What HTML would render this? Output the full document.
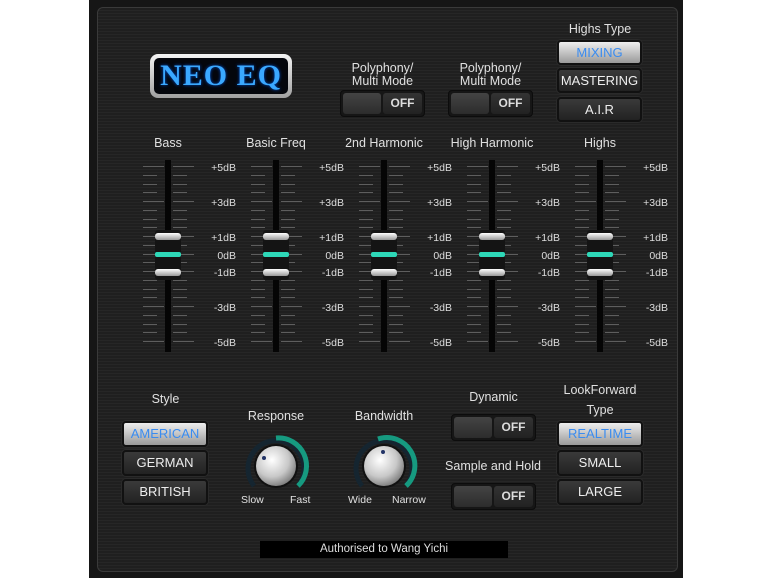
<!DOCTYPE html>
<html><head><meta charset="utf-8"><style>
*{margin:0;padding:0;box-sizing:border-box}
body{width:770px;height:578px;background:#fff;position:relative;overflow:hidden;font-family:"Liberation Sans",sans-serif;color:#ddd}
.a{position:absolute}
#outer{left:89px;top:0;width:594px;height:578px;background:#161616}
#inner{left:97px;top:7px;width:581px;height:565px;border:1px solid #3a3a3a;border-radius:6px;background:repeating-linear-gradient(0deg,#1f1f1f 0,#1f1f1f 2px,#262626 2px,#262626 3px)}
.lbl{position:absolute;font-size:12.5px;color:#e0e0e0;text-align:center;white-space:nowrap}
.btn{position:absolute;border-radius:4px;background:linear-gradient(#3a3a3a,#222);border:2px solid #111;box-shadow:0 0 0 1px #2a2a2a;color:#eee;font-size:13px;text-align:center;font-weight:normal}
.btn.on{background:linear-gradient(#eee,#9a9a9a);color:#3a8cf0}
.tog{position:absolute;width:85px;height:27px;border-radius:4px;background:#161616;border:1px solid #0c0c0c}
.tog .l{position:absolute;left:2px;top:2px;width:38px;height:21px;border-radius:3px;background:linear-gradient(#444,#2c2c2c)}
.tog .r{position:absolute;left:42px;top:2px;width:39px;height:21px;border-radius:3px;background:linear-gradient(#333,#222);color:#ddd;font-size:12px;font-weight:bold;text-align:center;line-height:21px}
.db{position:absolute;font-size:10.5px;color:#ddd;text-align:right;width:36px}
.tick{position:absolute;height:1px;background:#5e5e5e}
.track{position:absolute;width:6px;background:#050505}
</style></head><body>
<div id="outer" class="a"></div>
<div id="inner" class="a"></div>

<div class="a" style="left:150px;top:54px;width:142px;height:44px;border-radius:8px;background:linear-gradient(#f4f4f4,#a0a0a0);padding:4px">
<div style="width:100%;height:100%;border-radius:5px;background:#04060c;font-family:'Liberation Serif',serif;font-weight:bold;font-size:30px;color:#3aa8ff;text-align:center;line-height:36px;letter-spacing:1px;text-shadow:0 0 3px #0050d0">NEO EQ</div></div>

<div class="lbl" style="left:340px;top:62px;width:85px;line-height:13px">Polyphony/<br>Multi Mode</div>
<div class="tog" style="left:340px;top:90px"><div class="l"></div><div class="r">OFF</div></div>
<div class="lbl" style="left:448px;top:62px;width:85px;line-height:13px">Polyphony/<br>Multi Mode</div>
<div class="tog" style="left:448px;top:90px"><div class="l"></div><div class="r">OFF</div></div>

<div class="lbl" style="left:558px;top:22px;width:84px">Highs Type</div>
<div class="btn on" style="left:557px;top:40px;width:85px;height:25px;line-height:21px">MIXING</div>
<div class="btn" style="left:557px;top:68px;width:85px;height:25px;line-height:21px">MASTERING</div>
<div class="btn" style="left:557px;top:97px;width:85px;height:25px;line-height:21px">A.I.R</div>

<div id="sliders"></div>

<div class="lbl" style="left:123px;top:392px;width:85px">Style</div>
<div class="btn on" style="left:122px;top:421px;width:86px;height:26px;line-height:22px">AMERICAN</div>
<div class="btn" style="left:122px;top:450px;width:86px;height:26px;line-height:22px">GERMAN</div>
<div class="btn" style="left:122px;top:479px;width:86px;height:26px;line-height:22px">BRITISH</div>

<div class="lbl" style="left:236px;top:409px;width:80px">Response</div>
<div class="lbl" style="left:344px;top:409px;width:80px">Bandwidth</div>
<svg class="a" style="left:240px;top:432px" width="72" height="68">
<defs><radialGradient id="k" cx="40%" cy="35%" r="70%"><stop offset="0" stop-color="#fff"/><stop offset="0.6" stop-color="#c8c8c8"/><stop offset="1" stop-color="#777"/></radialGradient></defs>
<path d="M14 54 A28 28 0 1 1 58 54" fill="none" stroke="#152530" stroke-width="5"/>
<path d="M36 6 A28 28 0 0 1 58 54" fill="none" stroke="#169a80" stroke-width="5"/>
<circle cx="36" cy="34" r="22" fill="#111"/><circle cx="36" cy="34" r="20" fill="url(#k)"/>
<circle cx="24" cy="26" r="2" fill="#236"/></svg>
<svg class="a" style="left:348px;top:432px" width="72" height="68">
<path d="M14 54 A28 28 0 1 1 58 54" fill="none" stroke="#152530" stroke-width="5"/>
<path d="M30 7 A28 28 0 0 1 58 54" fill="none" stroke="#169a80" stroke-width="5"/>
<circle cx="36" cy="34" r="22" fill="#111"/><circle cx="36" cy="34" r="20" fill="url(#k)"/>
<circle cx="35" cy="20" r="2" fill="#236"/></svg>
<div class="lbl" style="left:241px;top:494px;font-size:10.5px">Slow</div>
<div class="lbl" style="left:290px;top:494px;font-size:10.5px">Fast</div>
<div class="lbl" style="left:348px;top:494px;font-size:10.5px">Wide</div>
<div class="lbl" style="left:392px;top:494px;font-size:10.5px">Narrow</div>

<div class="lbl" style="left:451px;top:390px;width:85px">Dynamic</div>
<div class="tog" style="left:451px;top:414px"><div class="l"></div><div class="r">OFF</div></div>
<div class="lbl" style="left:436px;top:459px;width:114px">Sample and Hold</div>
<div class="tog" style="left:451px;top:483px"><div class="l"></div><div class="r">OFF</div></div>

<div class="lbl" style="left:550px;top:380px;width:100px;line-height:20px">LookForward<br>Type</div>
<div class="btn on" style="left:557px;top:421px;width:86px;height:26px;line-height:22px">REALTIME</div>
<div class="btn" style="left:557px;top:450px;width:86px;height:26px;line-height:22px">SMALL</div>
<div class="btn" style="left:557px;top:479px;width:86px;height:26px;line-height:22px">LARGE</div>

<div class="a" style="left:260px;top:541px;width:248px;height:17px;background:#000;color:#ddd;font-size:11.5px;text-align:center;line-height:17px">Authorised to Wang Yichi</div>

<script>
var names=["Bass","Basic Freq","2nd Harmonic","High Harmonic","Highs"];
var h="";
var labs={0:"+5dB",4:"+3dB",8:"+1dB",10:"0dB",12:"-1dB",16:"-3dB",20:"-5dB"};
for(var i=0;i<5;i++){var cx=168+i*108;
h+='<div class="lbl" style="left:'+(cx-50)+'px;top:136px;width:100px">'+names[i]+'</div>';
for(var t=0;t<=20;t++){var y=Math.round(166+t*8.75);var maj=(t%4==0)||t==10;
h+='<div class="tick" style="left:'+(cx-25)+'px;top:'+y+'px;width:'+(maj?21:14)+'px"></div>';
h+='<div class="tick" style="left:'+(cx+5)+'px;top:'+y+'px;width:'+(maj?21:14)+'px"></div>';
if(labs[t])h+='<div class="db" style="left:'+(cx+32)+'px;top:'+(y-4)+'px">'+labs[t]+'</div>';}
h+='<div class="track" style="left:'+(cx-3)+'px;top:160px;height:192px"></div>';
h+='<div class="a" style="left:'+(cx-13)+'px;top:230px;width:26px;height:50px;background:#141414;border-radius:3px"></div>';
h+='<div class="a" style="left:'+(cx-13)+'px;top:233px;width:26px;height:7px;border-radius:3px;background:linear-gradient(#fff,#999)"></div>';
h+='<div class="a" style="left:'+(cx-13)+'px;top:252px;width:26px;height:5px;border-radius:2px;background:#2ed8b8"></div>';
h+='<div class="a" style="left:'+(cx-13)+'px;top:269px;width:26px;height:7px;border-radius:3px;background:linear-gradient(#fff,#999)"></div>';}
document.getElementById("sliders").innerHTML=h;
</script>
</body></html>
